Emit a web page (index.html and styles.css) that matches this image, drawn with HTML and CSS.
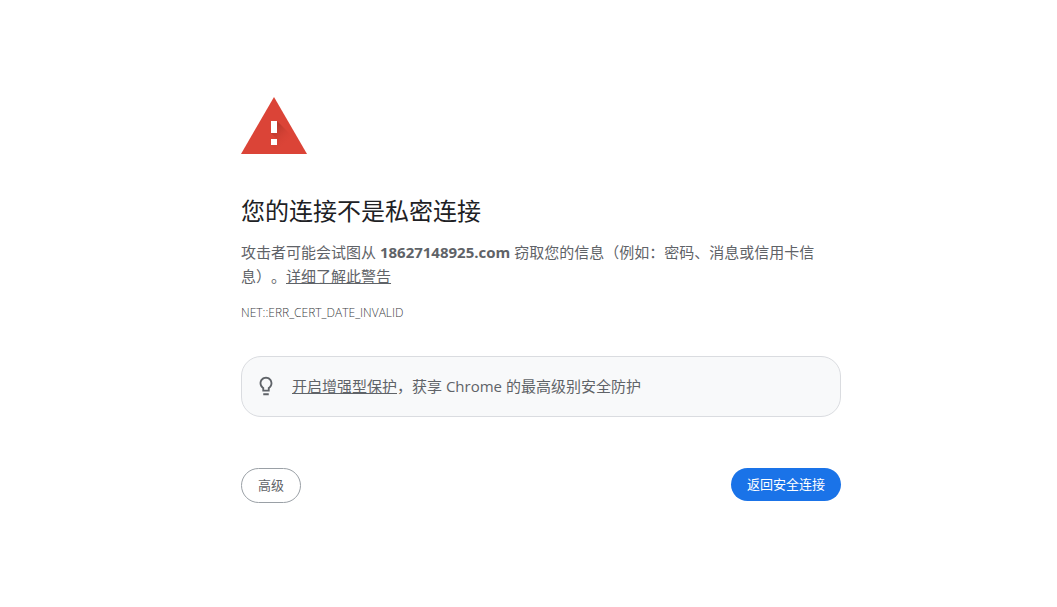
FILE: index.html
```html
<!DOCTYPE html>
<html lang="zh-CN">
<head>
	<title>隐私设置错误</title>
	<meta charset="utf-8">
	<meta name="viewport" content="width=device-width, initial-scale=1.0">
	<link rel="stylesheet" href="styles.css">
</head>
<body>

<main class="wrapper">
	<svg class="icon" viewBox="0 0 66 57" aria-hidden="true">
		<defs>
			<linearGradient id="shade" gradientUnits="userSpaceOnUse" x1="31" y1="34" x2="45" y2="48">
				<stop offset="0" stop-color="#a52f25" stop-opacity="0.6"/>
				<stop offset="1" stop-color="#db4437" stop-opacity="0"/>
			</linearGradient>
		</defs>
		<path fill="#db4437" d="M33 0L66 57H0z"/>
		<path fill="url(#shade)" d="M36 24L58 46L64 57H39L30 48V42H36L30 36z"/>
		<path fill="#fff" d="M30 24h6v12h-6zM30 42h6v6h-6z"/>
	</svg>

	<h1>您的连接不是私密连接</h1>
	<p class="message">攻击者可能会试图从 <strong>18627148925.com</strong> 窃取您的信息（例如：密码、消息或信用卡信息）。<a href="#">详细了解此警告</a></p>
	<div class="code">NET::ERR_CERT_DATE_INVALID</div>

	<div class="promo">
		<svg class="bulb" viewBox="0 0 24 24" aria-hidden="true">
			<path fill="#5f6368" d="M9 20h6v2H9zM12 2C8.14 2 5 5.14 5 9c0 2.38 1.19 4.47 3 5.74V18h8v-3.26c1.81-1.27 3-3.36 3-5.74 0-3.86-3.14-7-7-7zm2.85 11.1l-.85.6V16h-4v-2.3l-.85-.6A4.997 4.997 0 0 1 7 9c0-2.76 2.24-5 5-5s5 2.24 5 5c0 1.63-.8 3.16-2.15 4.1z"/>
		</svg>
		<p><a href="#">开启增强型保护</a>，获享 Chrome 的最高级别安全防护</p>
	</div>

	<div class="buttons">
		<button type="button" class="secondary">高级</button>
		<button type="button" class="primary">返回安全连接</button>
	</div>
</main>

</body>
</html>
```
FILE: styles.css
```css
body {
	margin: 0;
	padding: 0 0 0 25px;
	background: #fff;
	color: #5f6368;
	font-family: "Open Sans", "Noto Sans CJK SC", sans-serif;
	font-size: 15px;
	line-height: 24px;
	text-spacing-trim: space-all;
}
.wrapper {
	box-sizing: border-box;
	max-width: 600px;
	margin: 0 auto;
	padding-top: 16vh;
}
.icon {
	display: block;
	width: 66px;
	height: 57px;
	margin-bottom: 41px;
}
h1 {
	margin: 0 0 13px;
	color: #202124;
	font-size: 24px;
	font-weight: normal;
	line-height: 32px;
}
p {
	margin: 0;
}
a {
	color: inherit;
}
.code {
	margin-top: 13px;
	color: #3c4043;
	font-size: 12px;
	font-weight: 300;
}
.promo {
	display: flex;
	align-items: center;
	gap: 15px;
	margin-top: 31px;
	padding: 17px 13px 18px;
	border: 1px solid #dadce0;
	border-radius: 20px;
	background: #f8f9fa;
}
.bulb {
	flex: none;
	width: 22px;
	height: 22px;
}
.buttons {
	display: flex;
	align-items: flex-start;
	justify-content: space-between;
	margin-top: 51px;
}
button {
	padding: 8px 16px;
	border: 0;
	border-radius: 20px;
	font-family: inherit;
	font-size: 13px;
	line-height: 17px;
	cursor: pointer;
}
.secondary {
	border: 1px solid #9aa0a6;
	background: #fff;
	color: #5f6368;
}
.primary {
	background: #1a73e8;
	color: #fff;
}
```
